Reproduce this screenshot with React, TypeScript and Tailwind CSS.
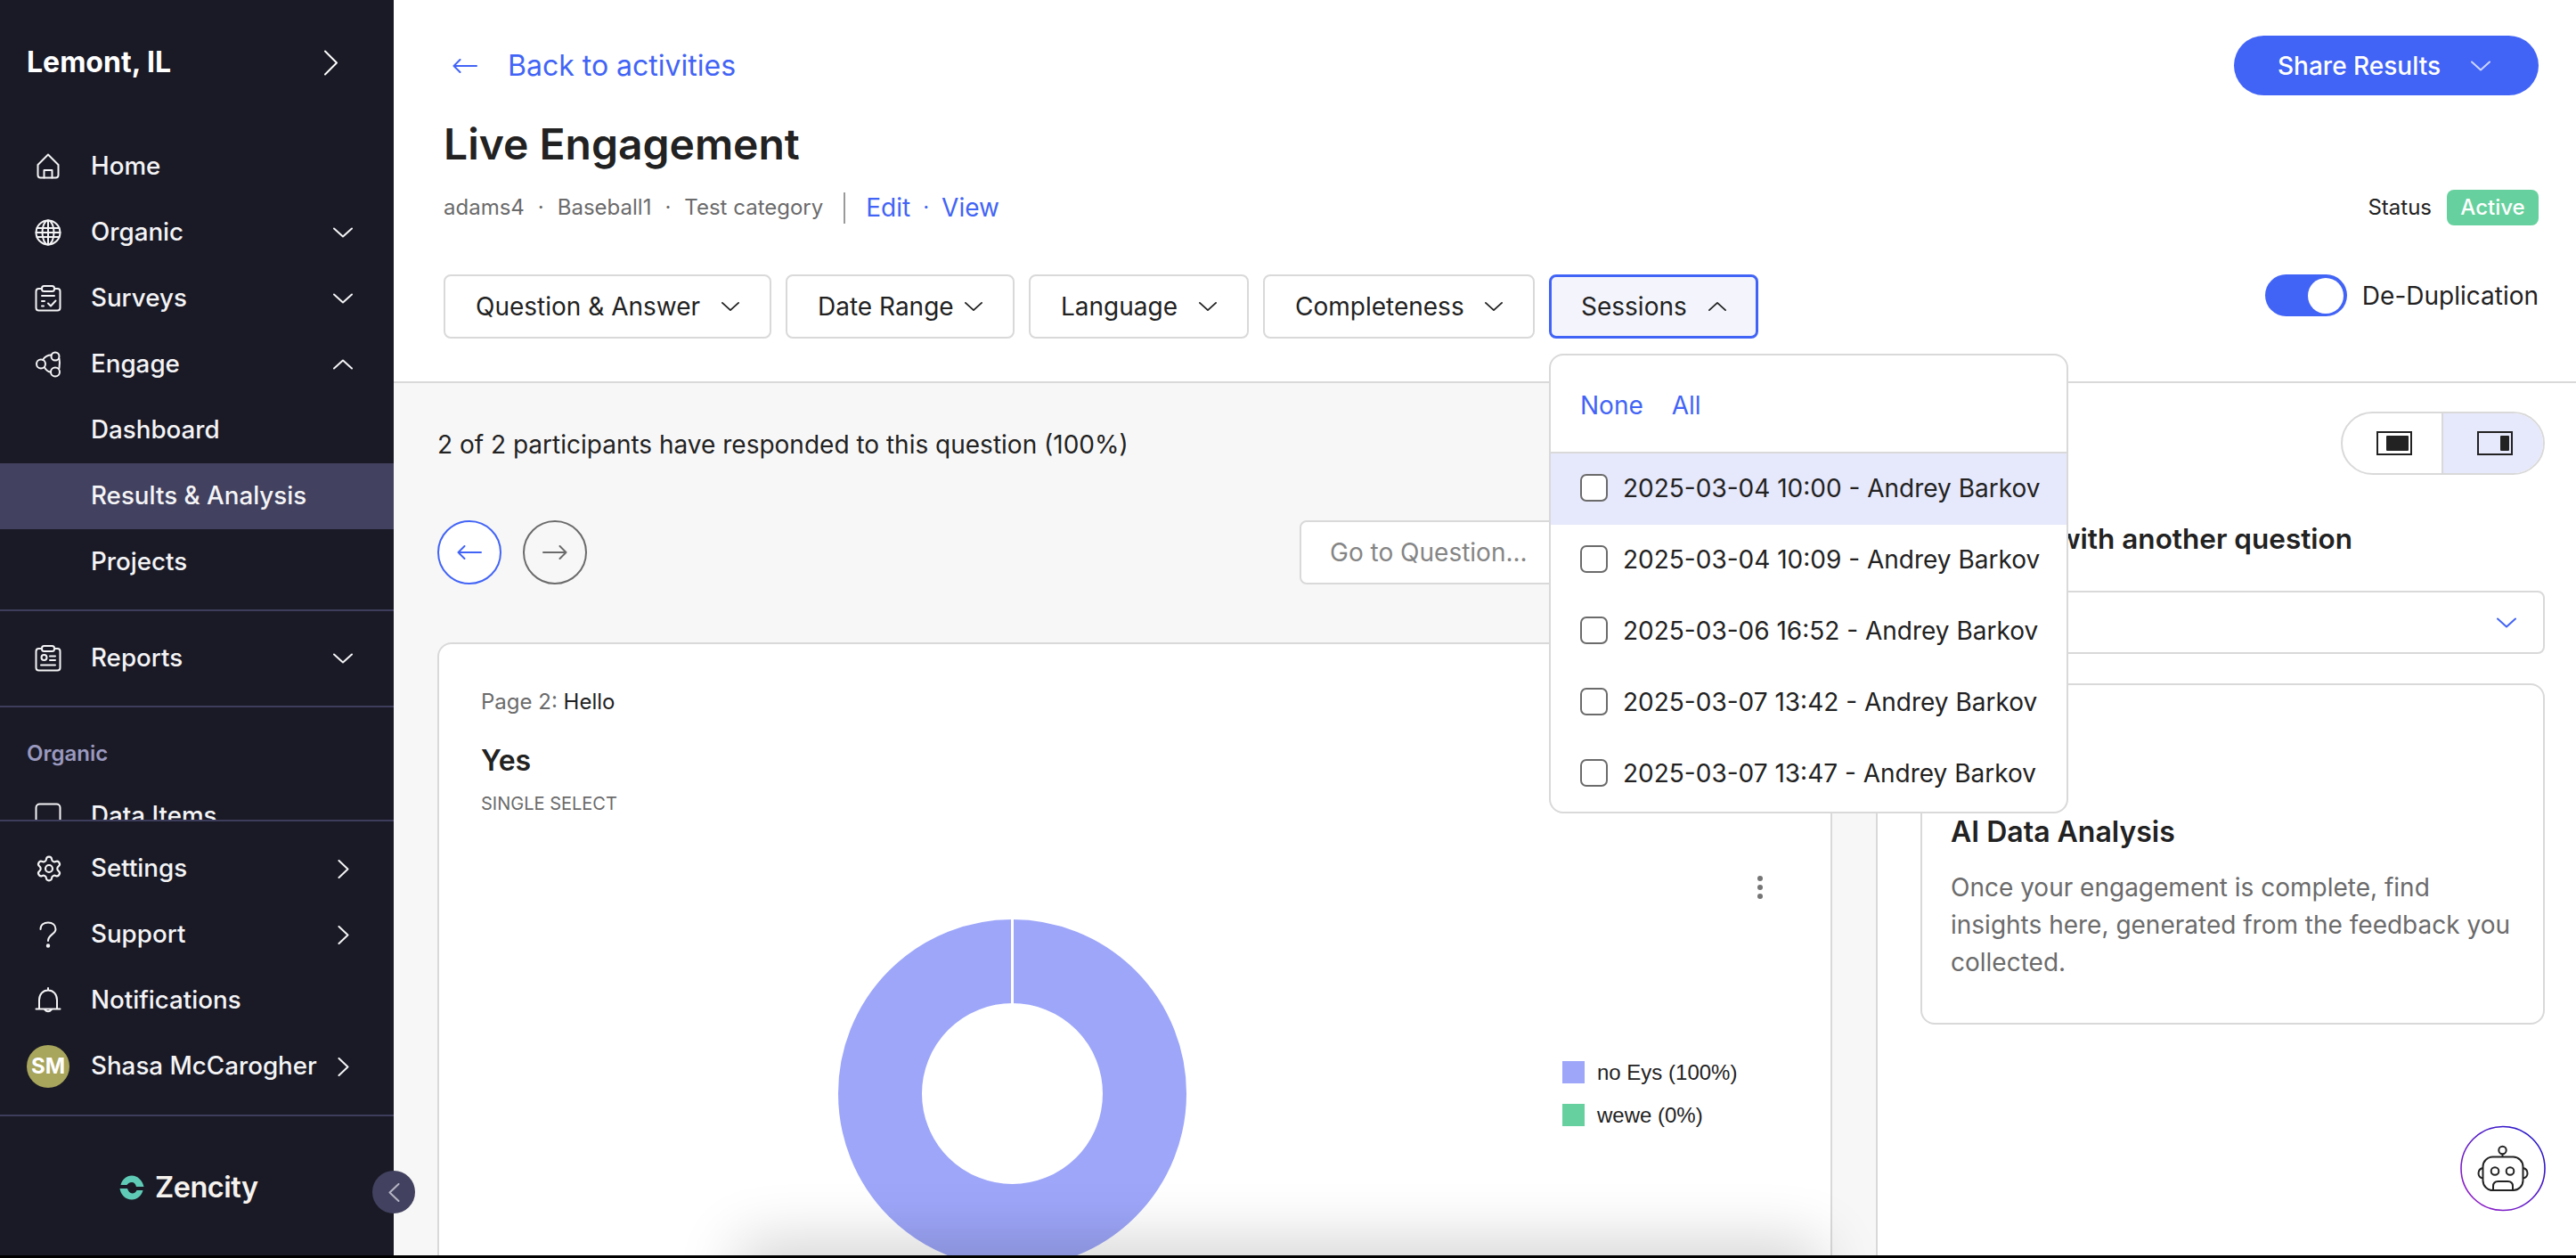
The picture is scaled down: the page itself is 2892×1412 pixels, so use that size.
import { Settings } from "lucide-react";

const font = "[font-family:Inter,'Liberation_Sans',sans-serif]";

function ChevronDown({ className = "" }: { className?: string }) {
  return (
    <svg width="22" height="12" viewBox="0 0 22 12" fill="none" className={className}>
      <path d="M1 1.5 L11 10.5 L21 1.5" stroke="currentColor" strokeWidth="2" strokeLinecap="round" strokeLinejoin="round" />
    </svg>
  );
}

function ChevronRight({ className = "" }: { className?: string }) {
  return (
    <svg width="13" height="21" viewBox="0 0 13 21" fill="none" className={className}>
      <path d="M1.5 1 L11.5 10.5 L1.5 20" stroke="currentColor" strokeWidth="2" strokeLinecap="round" strokeLinejoin="round" />
    </svg>
  );
}

function Arrow({ left, className = "" }: { left?: boolean; className?: string }) {
  return (
    <svg width="28" height="16" viewBox="0 0 28 16" fill="none" className={className}>
      {left ? (
        <path d="M27 8 H1.5 M8.5 1 L1.5 8 L8.5 15" stroke="currentColor" strokeWidth="2" strokeLinecap="round" strokeLinejoin="round" />
      ) : (
        <path d="M1 8 H26.5 M19.5 1 L26.5 8 L19.5 15" stroke="currentColor" strokeWidth="2" strokeLinecap="round" strokeLinejoin="round" />
      )}
    </svg>
  );
}

const iconProps = {
  width: 30,
  height: 30,
  viewBox: "0 0 30 30",
  fill: "none",
  stroke: "currentColor",
  strokeWidth: 2,
  strokeLinecap: "round" as const,
  strokeLinejoin: "round" as const,
};

function HomeIcon() {
  return (
    <svg {...iconProps}>
      <path d="M3.5 13 L15 1.5 L26.5 13 V24.5 Q26.5 27.5 23.5 27.5 H6.5 Q3.5 27.5 3.5 24.5 Z" />
      <path d="M10.5 27.5 V19 H19.5 V27.5" />
    </svg>
  );
}

function GlobeIcon() {
  return (
    <svg {...iconProps}>
      <circle cx="15" cy="15" r="13.5" />
      <ellipse cx="15" cy="15" rx="6.5" ry="13.5" />
      <path d="M15 1.5 V28.5 M2.5 10 H27.5 M1.5 15 H28.5 M2.5 20 H27.5" />
    </svg>
  );
}

function SurveyIcon() {
  return (
    <svg {...iconProps}>
      <path d="M8 4 H4.5 Q1.5 4 1.5 7 V25.5 Q1.5 28.5 4.5 28.5 H25.5 Q28.5 28.5 28.5 25.5 V7 Q28.5 4 25.5 4 H22" />
      <rect x="8" y="1" width="14" height="6" rx="2.5" />
      <path d="M8 12 H22 M8 18 H11 M8 23.5 H10 M15 20.5 L18 23.5 L23.5 17.5" />
    </svg>
  );
}

function EngageIcon() {
  return (
    <svg {...iconProps}>
      <circle cx="23" cy="6" r="4.5" />
      <circle cx="7" cy="14.5" r="5" />
      <circle cx="23" cy="23.5" r="5" />
      <path d="M18.7 4.5 Q12.5 4.5 9 10 M11 18.5 Q14 23.5 18 23.5 M27.5 8.5 Q28.5 13 27.5 19" />
    </svg>
  );
}

function ReportIcon() {
  return (
    <svg {...iconProps}>
      <path d="M8 4 H4.5 Q1.5 4 1.5 7 V25.5 Q1.5 28.5 4.5 28.5 H25.5 Q28.5 28.5 28.5 25.5 V7 Q28.5 4 25.5 4 H22" />
      <rect x="8" y="1" width="14" height="6" rx="2.5" />
      <circle cx="10.5" cy="14" r="3" />
      <path d="M17 12.5 H23 M17 17 H23 M7 22.5 H23" />
    </svg>
  );
}

function DataIcon() {
  return (
    <svg {...iconProps}>
      <rect x="1.5" y="1.5" width="27" height="26" rx="4" />
    </svg>
  );
}

function HelpIcon() {
  return (
    <svg {...iconProps}>
      <path d="M6.5 9 C6.5 4 10.5 1.5 15 1.5 C20 1.5 23.5 4.5 23.5 9 C23.5 14.5 15 15 15 22" />
      <circle cx="15" cy="27.5" r="1.2" fill="currentColor" />
    </svg>
  );
}

function BellIcon() {
  return (
    <svg {...iconProps}>
      <path d="M1.5 24.5 H28.5 M5 24.5 V14.5 C5 8 9 3.5 15 3.5 C21 3.5 25 8 25 14.5 V24.5 M15 1 V3.5 M11 25 Q15 29.5 19 25" />
    </svg>
  );
}

function NavRow({
  icon,
  label,
  chevron,
  active,
}: {
  icon?: React.ReactNode;
  label: string;
  chevron?: "down" | "up" | "right";
  active?: boolean;
}) {
  return (
    <div className={`flex h-[74px] shrink-0 items-center pl-[39px] pr-[46px] text-[27.75px] font-medium text-[#f4f4f6] ${active ? "bg-[#42415f]" : ""}`}>
      <div className="flex w-[63px] shrink-0 items-center text-[#f4f4f6]">{icon}</div>
      <span className="flex-1 whitespace-nowrap">{label}</span>
      {chevron === "down" && <ChevronDown />}
      {chevron === "up" && <ChevronDown className="rotate-180" />}
      {chevron === "right" && <ChevronRight className="mr-[4px]" />}
    </div>
  );
}

function Sidebar() {
  return (
    <aside className="flex h-full w-[442px] shrink-0 flex-col bg-[#1a1a26]">
      <div className="h-[920px] shrink-0 overflow-hidden">
        <div className="flex h-[140px] items-center justify-between pl-[30px] pr-[62px]">
          <span className="text-[32px] font-bold text-white">Lemont, IL</span>
          <svg width="17" height="29" viewBox="0 0 17 29" fill="none" className="text-white">
            <path d="M2 1.5 L15 14.5 L2 27.5" stroke="currentColor" strokeWidth="2" strokeLinecap="round" strokeLinejoin="round" />
          </svg>
        </div>
        <div className="pt-[10px]">
          <NavRow icon={<HomeIcon />} label="Home" />
          <NavRow icon={<GlobeIcon />} label="Organic" chevron="down" />
          <NavRow icon={<SurveyIcon />} label="Surveys" chevron="down" />
          <NavRow icon={<EngageIcon />} label="Engage" chevron="up" />
          <NavRow label="Dashboard" />
          <NavRow label="Results & Analysis" active />
          <NavRow label="Projects" />
        </div>
        <div className="mt-[16px] h-[2px] bg-[#3e3d5c]" />
        <div className="pt-[16px]">
          <NavRow icon={<ReportIcon />} label="Reports" chevron="down" />
        </div>
        <div className="mt-[16px] h-[2px] bg-[#3e3d5c]" />
        <div className="flex h-[85px] items-end pb-[15px] pl-[30px] text-[24px] font-semibold text-[#9a99bf]">Organic</div>
        <NavRow icon={<DataIcon />} label="Data Items" />
      </div>
      <div className="flex flex-1 flex-col border-t-2 border-[#3e3d5c] pt-[16px]">
        <NavRow icon={<Settings size={32} strokeWidth={1.6} />} label="Settings" chevron="right" />
        <NavRow icon={<HelpIcon />} label="Support" chevron="right" />
        <NavRow icon={<BellIcon />} label="Notifications" />
        <div className="flex h-[74px] shrink-0 items-center pl-[30px] pr-[46px] text-[27.75px] font-medium text-[#f4f4f6]">
          <div className="mr-[24px] flex h-[48px] w-[48px] shrink-0 items-center justify-center rounded-full bg-[#a8a55c] text-[24px] font-bold text-white">SM</div>
          <span className="flex-1 whitespace-nowrap">Shasa McCarogher</span>
          <ChevronRight className="mr-[4px]" />
        </div>
        <div className="mt-[17px] h-[2px] bg-[#3e3d5c]" />
        <div className="flex flex-1 items-center gap-[12px] pl-[134px] pt-[4px]">
          <svg width="28" height="28" viewBox="0 0 28 28" fill="#5fcbb7">
            <path d="M1.5 11 C3 5 8 0.5 14 0.5 C20.5 0.5 26 6 27.5 13 H19 C18 9.5 16.5 8 14 8 C11 8 9.5 9.5 8.5 11 Z" />
            <path d="M0.5 15 H9 C10 18 12 20.5 14.5 20.5 C17 20.5 18.5 19 19.5 17 H26.5 C25 23 20 27.5 14 27.5 C7 27.5 1.5 22 0.5 15 Z" />
          </svg>
          <span className="text-[32.5px] font-semibold tracking-[-0.5px] text-[#f6f2ee]">Zencity</span>
        </div>
      </div>
    </aside>
  );
}

const filters = [
  { label: "Question & Answer", w: "w-[368px]" },
  { label: "Date Range", w: "w-[257px]" },
  { label: "Language", w: "w-[247px]" },
  { label: "Completeness", w: "w-[305px]" },
];

const sessions = [
  "2025-03-04 10:00 - Andrey Barkov",
  "2025-03-04 10:09 - Andrey Barkov",
  "2025-03-06 16:52 - Andrey Barkov",
  "2025-03-07 13:42 - Andrey Barkov",
  "2025-03-07 13:47 - Andrey Barkov",
];

function Header() {
  return (
    <header className="h-[430px] shrink-0 border-b-2 border-[#d9d9d9] bg-white pl-[56px] pr-[42px] pt-[40px]">
      <div className="flex h-[67px] items-center justify-between">
        <div className="flex items-center gap-[34px] pl-[10px] text-[#4264f6]">
          <Arrow left />
          <span className="text-[32px]">Back to activities</span>
        </div>
        <button className="flex h-[67px] w-[342px] items-center justify-between rounded-full bg-[#4264f6] pl-[49px] pr-[54px] text-[28px] font-medium text-white">
          Share Results
          <ChevronDown className="text-[#cdd5fd]" />
        </button>
      </div>
      <h1 className="mt-[25px] h-[60px] text-[48px] leading-[60px] font-semibold text-[#222222]">Live Engagement</h1>
      <div className="mt-[21px] flex h-[40px] items-center justify-between">
        <div className="flex items-center text-[24px] text-[#6b6b6b]">
          <span>adams4</span>
          <span className="mx-[15px]">·</span>
          <span>Baseball1</span>
          <span className="mx-[15px]">·</span>
          <span>Test category</span>
          <span className="mx-[23px] h-[35px] w-[2px] bg-[#9a9a9a]" />
          <span className="text-[28px] text-[#4264f6]">Edit</span>
          <span className="mx-[14px] text-[#4264f6]">·</span>
          <span className="text-[28px] text-[#4264f6]">View</span>
        </div>
        <div className="flex items-center text-[24px]">
          <span className="mr-[17px] text-[#222222]">Status</span>
          <span className="flex h-[40px] w-[103px] items-center justify-center rounded-[8px] bg-[#66d19e] font-medium text-white">Active</span>
        </div>
      </div>
      <div className="mt-[55px] flex items-start justify-between">
        <div className="flex gap-[16px]">
          {filters.map((f) => (
            <button key={f.label} className={`flex h-[72px] items-center justify-between rounded-[8px] border-2 border-[#d9d9d9] bg-white px-[34px] text-[28px] text-[#222222] ${f.w}`}>
              <span className="whitespace-nowrap">{f.label}</span>
              <ChevronDown className="w-[20px]" />
            </button>
          ))}
          <div className="relative">
            <button className="flex h-[72px] w-[235px] items-center justify-between rounded-[8px] border-[3px] border-[#4264f6] bg-[#f4f5fc] px-[33px] text-[28px] text-[#222222]">
              Sessions
              <ChevronDown className="w-[20px] rotate-180" />
            </button>
            <div className="absolute left-0 top-[89px] z-20 w-[583px] overflow-hidden rounded-[16px] border-2 border-[#d9d9d9] bg-white pb-[2px]">
              <div className="flex h-[110px] items-center gap-[32px] border-b-2 border-[#d9d9d9] pl-[33px] pt-[3px] text-[28px] text-[#4264f6]">
                <span>None</span>
                <span>All</span>
              </div>
              {sessions.map((s, i) => (
                <div key={s} className={`flex h-[80px] items-center gap-[17px] pb-[3px] pl-[33px] text-[28px] whitespace-nowrap text-[#222222] ${i === 0 ? "bg-[#e6e8fb]" : ""}`}>
                  <span className="h-[31px] w-[31px] shrink-0 rounded-[7px] border-2 border-[#6b6b6b] bg-white" />
                  {s}
                </div>
              ))}
            </div>
          </div>
        </div>
        <div className="flex items-center gap-[17px]">
          <div className="flex h-[47px] w-[92px] items-center justify-end rounded-full bg-[#4264f6] pr-[4px]">
            <div className="h-[40px] w-[40px] rounded-full bg-white" />
          </div>
          <span className="mt-[1px] text-[28px] text-[#222222]">De-Duplication</span>
        </div>
      </div>
    </header>
  );
}

function QuestionPanel() {
  return (
    <section className="relative w-[1666px] shrink-0 overflow-hidden border-r-2 border-[#d9d9d9] bg-[#f7f7f7] px-[49px] pt-[49px]">
      <p className="h-[40px] text-[28px] leading-[40px] text-[#222222]">2 of 2 participants have responded to this question (100%)</p>
      <div className="mt-[65px] flex h-[72px] items-center justify-between">
        <div className="flex gap-[24px]">
          <button className="flex h-[72px] w-[72px] items-center justify-center rounded-full border-2 border-[#4264f6] bg-white text-[#4264f6]">
            <Arrow left />
          </button>
          <button className="flex h-[72px] w-[72px] items-center justify-center rounded-full border-2 border-[#6b6b6b] text-[#6b6b6b]">
            <Arrow />
          </button>
        </div>
        <div className="flex h-[72px] w-[598px] items-center rounded-[8px] border-2 border-[#d9d9d9] bg-white pl-[32px] text-[28px] text-[#858585]">Go to Question...</div>
      </div>
      <div className="mt-[65px] h-[760px] rounded-[16px] border-2 border-[#d9d9d9] bg-white pl-[47px] pt-[49px]">
        <p className="h-[32px] text-[24px] leading-[32px] text-[#6b6b6b]">
          Page 2: <span className="text-[#222222]">Hello</span>
        </p>
        <p className="mt-[26px] h-[48px] text-[32px] leading-[48px] font-semibold text-[#222222]">Yes</p>
        <p className="mt-[12px] h-[24px] text-[20px] leading-[24px] text-[#6b6b6b]">SINGLE SELECT</p>
        <div className="mt-[69px] flex justify-end pr-[75px]">
          <svg width="8" height="26" viewBox="0 0 8 26" fill="#757575">
            <circle cx="4" cy="3" r="3" />
            <circle cx="4" cy="13" r="3" />
            <circle cx="4" cy="23" r="3" />
          </svg>
        </div>
        <div className="mt-[23px] flex items-center pl-[401px]">
          <svg width="391" height="391" viewBox="0 0 391 391" fill="none">
            <circle cx="195.5" cy="195.5" r="148.5" stroke="#9da6f9" strokeWidth="94" />
            <path d="M195.5 0 V95" stroke="#ffffff" strokeWidth="3" />
          </svg>
          <div className="ml-[422px] flex flex-col gap-[23px] [font-family:'Liberation_Sans',sans-serif] text-[24px] text-[#222222]">
            <div className="flex h-[25px] items-center gap-[14px] whitespace-nowrap">
              <span className="h-[25px] w-[25px] bg-[#9da6f9]" />
              no Eys (100%)
            </div>
            <div className="flex h-[25px] items-center gap-[14px] whitespace-nowrap">
              <span className="h-[25px] w-[25px] bg-[#66d19e]" />
              wewe (0%)
            </div>
          </div>
        </div>
      </div>
      {/* shadow coming up from the cut-off bottom edge */}
      <div className="absolute bottom-[-40px] left-[400px] h-[40px] w-[1190px] shadow-[0_0_70px_12px_rgba(0,0,0,0.2)]" />
    </section>
  );
}

function SidePanel() {
  return (
    <section className="relative min-w-0 flex-1 bg-white pl-[48px] pr-[35px] pt-[32px]">
      <div className="flex justify-end">
        <div className="flex h-[71px] w-[229px] overflow-hidden rounded-full border-2 border-[#d9d9d9]">
          <div className="flex w-[113px] items-center justify-center border-r-2 border-[#d9d9d9] pl-[4px]">
            <svg width="40" height="27" viewBox="0 0 40 27" fill="none">
              <rect x="1" y="1" width="38" height="25" stroke="#222222" strokeWidth="2" />
              <rect x="11" y="5" width="25" height="17" rx="1" fill="#222222" />
            </svg>
          </div>
          <div className="flex flex-1 items-center justify-center bg-[#e6e8fb] pl-[3px]">
            <svg width="40" height="27" viewBox="0 0 40 27" fill="none">
              <rect x="1" y="1" width="38" height="25" stroke="#222222" strokeWidth="2" />
              <rect x="26" y="5" width="10" height="17" rx="1" fill="#222222" />
            </svg>
          </div>
        </div>
      </div>
      <p className="mt-[52px] h-[40px] pl-[6px] text-[31.5px] leading-[40px] font-semibold whitespace-nowrap text-[#222222]">Compare with another question</p>
      <div className="mt-[38px] flex h-[71px] items-center justify-end rounded-[8px] border-2 border-[#d9d9d9] pr-[30px] text-[#4264f6]">
        <ChevronDown />
      </div>
      <div className="mt-[33px] h-[383px] rounded-[16px] border-2 border-[#d9d9d9] pl-[32px] pt-[143px]">
        <h2 className="h-[44px] text-[32px] leading-[44px] font-semibold text-[#222222]">AI Data Analysis</h2>
        <p className="mt-[19px] text-[28px] leading-[42px] whitespace-nowrap text-[#6b6b6b]">
          Once your engagement is complete, find
          <br />
          insights here, generated from the feedback you
          <br />
          collected.
        </p>
      </div>
      <svg width="100" height="105" viewBox="0 0 100 105" fill="none" className="absolute bottom-[45px] right-[32px]">
        <defs>
          <linearGradient id="ring" x1="1" y1="0" x2="0" y2="1">
            <stop offset="0" stopColor="#1414c8" />
            <stop offset="1" stopColor="#a020c8" />
          </linearGradient>
        </defs>
        <circle cx="50" cy="52.5" r="47" stroke="url(#ring)" strokeWidth="1.6" fill="#ffffff" />
        <g stroke="#222222" strokeWidth="2">
          <rect x="27.5" y="39.5" width="45" height="37.5" rx="11" />
          <circle cx="49.5" cy="32" r="4.2" />
          <path d="M49.5 36.2 V39.5" />
          <circle cx="41" cy="55.5" r="4.3" />
          <circle cx="58" cy="55.5" r="4.3" />
          <path d="M39 77 V72.5 Q39 67 44.5 67 H55.5 Q61 67 61 72.5 V77" />
          <path d="M27.5 52 Q22.5 53 22.5 58 Q22.5 62.5 27.5 63.5" />
          <path d="M72.5 52 Q77.5 53 77.5 58 Q77.5 62.5 72.5 63.5" />
        </g>
      </svg>
    </section>
  );
}

export default function App() {
  return (
    <div className={`relative h-[1412px] w-[2892px] overflow-hidden border-b-[3px] border-black bg-white ${font}`}>
      <div className="flex h-full">
        <Sidebar />
        <main className="flex min-w-0 flex-1 flex-col">
          <Header />
          <div className="flex min-h-0 flex-1">
            <QuestionPanel />
            <SidePanel />
          </div>
        </main>
      </div>
      <button className="absolute left-[418px] top-[1314px] z-10 flex h-[48px] w-[48px] items-center justify-center rounded-full bg-[#42415f] text-[#b4b4c4]">
        <ChevronRight className="rotate-180" />
      </button>
    </div>
  );
}
